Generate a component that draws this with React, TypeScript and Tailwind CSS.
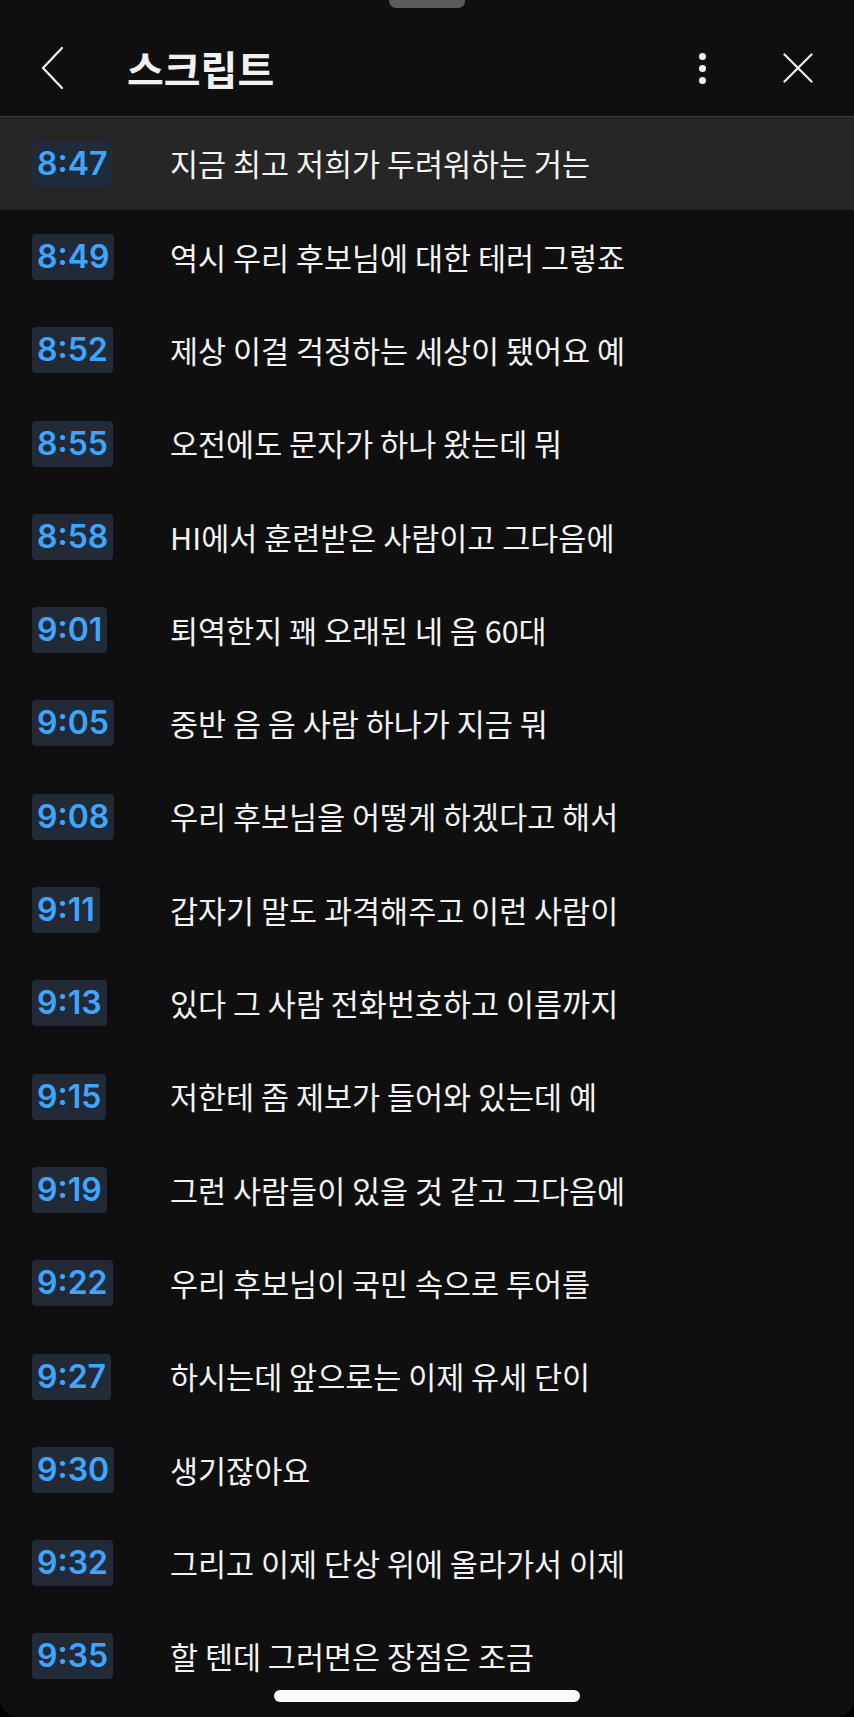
import React from 'react';

// ─── Data ───────────────────────────────────────────────────────────────────

interface Line {
  time: string;
  text: string;
}

const LINES: Line[] = [
  { time: '8:47', text: '지금 최고 저희가 두려워하는 거는' },
  { time: '8:49', text: '역시 우리 후보님에 대한 테러 그렇죠' },
  { time: '8:52', text: '제상 이걸 걱정하는 세상이 됐어요 예' },
  { time: '8:55', text: '오전에도 문자가 하나 왔는데 뭐' },
  { time: '8:58', text: 'HI에서 훈련받은 사람이고 그다음에' },
  { time: '9:01', text: '퇴역한지 꽤 오래된 네 음 60대' },
  { time: '9:05', text: '중반 음 음 사람 하나가 지금 뭐' },
  { time: '9:08', text: '우리 후보님을 어떻게 하겠다고 해서' },
  { time: '9:11', text: '갑자기 말도 과격해주고 이런 사람이' },
  { time: '9:13', text: '있다 그 사람 전화번호하고 이름까지' },
  { time: '9:15', text: '저한테 좀 제보가 들어와 있는데 예' },
  { time: '9:19', text: '그런 사람들이 있을 것 같고 그다음에' },
  { time: '9:22', text: '우리 후보님이 국민 속으로 투어를' },
  { time: '9:27', text: '하시는데 앞으로는 이제 유세 단이' },
  { time: '9:30', text: '생기잖아요' },
  { time: '9:32', text: '그리고 이제 단상 위에 올라가서 이제' },
  { time: '9:35', text: '할 텐데 그러면은 장점은 조금' },
];

const KO_FONT = "font-['Noto_Sans_CJK_KR','Noto_Sans',sans-serif]";

// ─── Component ──────────────────────────────────────────────────────────────

export default function App() {
  const active = 0;

  return (
    <div className="relative h-[1717px] w-full overflow-hidden bg-black">
      <div className="relative flex h-full flex-col overflow-hidden rounded-b-[18px] bg-[#0f0f0f]">
        {/* Drag handle */}
        <div className="absolute left-1/2 top-[-6px] h-[14px] w-[76px] -translate-x-1/2 rounded-full bg-[#5b5b5b]" />

        {/* Header */}
        <div className="flex h-[117px] shrink-0 items-center border-b border-[#3a3a3a] pt-[20px]">
          <button className="flex h-[60px] w-[64px] items-center justify-end pr-[1px]" aria-label="Back">
            <svg width="22" height="42" viewBox="0 0 22 42" fill="none">
              <path d="M21 1 L2 21 L21 41" stroke="#f1f1f1" strokeWidth="2.2" strokeLinecap="round" strokeLinejoin="round" />
            </svg>
          </button>
          <h1 className={`ml-[63px] text-[40px] font-bold leading-none text-[#f1f1f1] ${KO_FONT}`}>
            스크립트
          </h1>
          <div className="ml-auto flex items-center">
            <button className="flex h-[60px] w-[30px] flex-col items-center justify-center gap-[5px]" aria-label="More">
              <span className="h-[7px] w-[7px] rounded-full bg-[#f1f1f1]" />
              <span className="h-[7px] w-[7px] rounded-full bg-[#f1f1f1]" />
              <span className="h-[7px] w-[7px] rounded-full bg-[#f1f1f1]" />
            </button>
            <button className="ml-[65px] mr-[40px] flex h-[60px] w-[32px] items-center justify-center" aria-label="Close">
              <svg width="30" height="30" viewBox="0 0 30 30" fill="none">
                <path d="M1.5 1.5 L28.5 28.5 M28.5 1.5 L1.5 28.5" stroke="#f1f1f1" strokeWidth="2.2" strokeLinecap="round" />
              </svg>
            </button>
          </div>
        </div>

        {/* Transcript lines */}
        <div className="flex flex-col">
          {LINES.map((line, i) => (
            <div
              key={line.time}
              className={`flex h-[93.3px] shrink-0 items-center pl-[32px] ${i === active ? 'bg-[#262626]' : ''}`}
            >
              <div className="w-[138px] shrink-0">
                <span
                  className={`inline-block rounded-[4px] px-[5px] py-[5px] font-['Inter',sans-serif] text-[32px] font-semibold leading-[36px] text-[#3ea6ff] ${
                    i === active ? 'bg-[#1f2a3a]' : 'bg-[#222a38]'
                  }`}
                >
                  {line.time}
                </span>
              </div>
              <p className={`text-[30.5px] leading-none text-[#f3f3f3] ${KO_FONT}`}>{line.text}</p>
            </div>
          ))}
        </div>

        {/* Home indicator */}
        <div className="absolute bottom-[15px] left-1/2 h-[12px] w-[306px] -translate-x-1/2 rounded-full bg-white" />
      </div>
    </div>
  );
}
